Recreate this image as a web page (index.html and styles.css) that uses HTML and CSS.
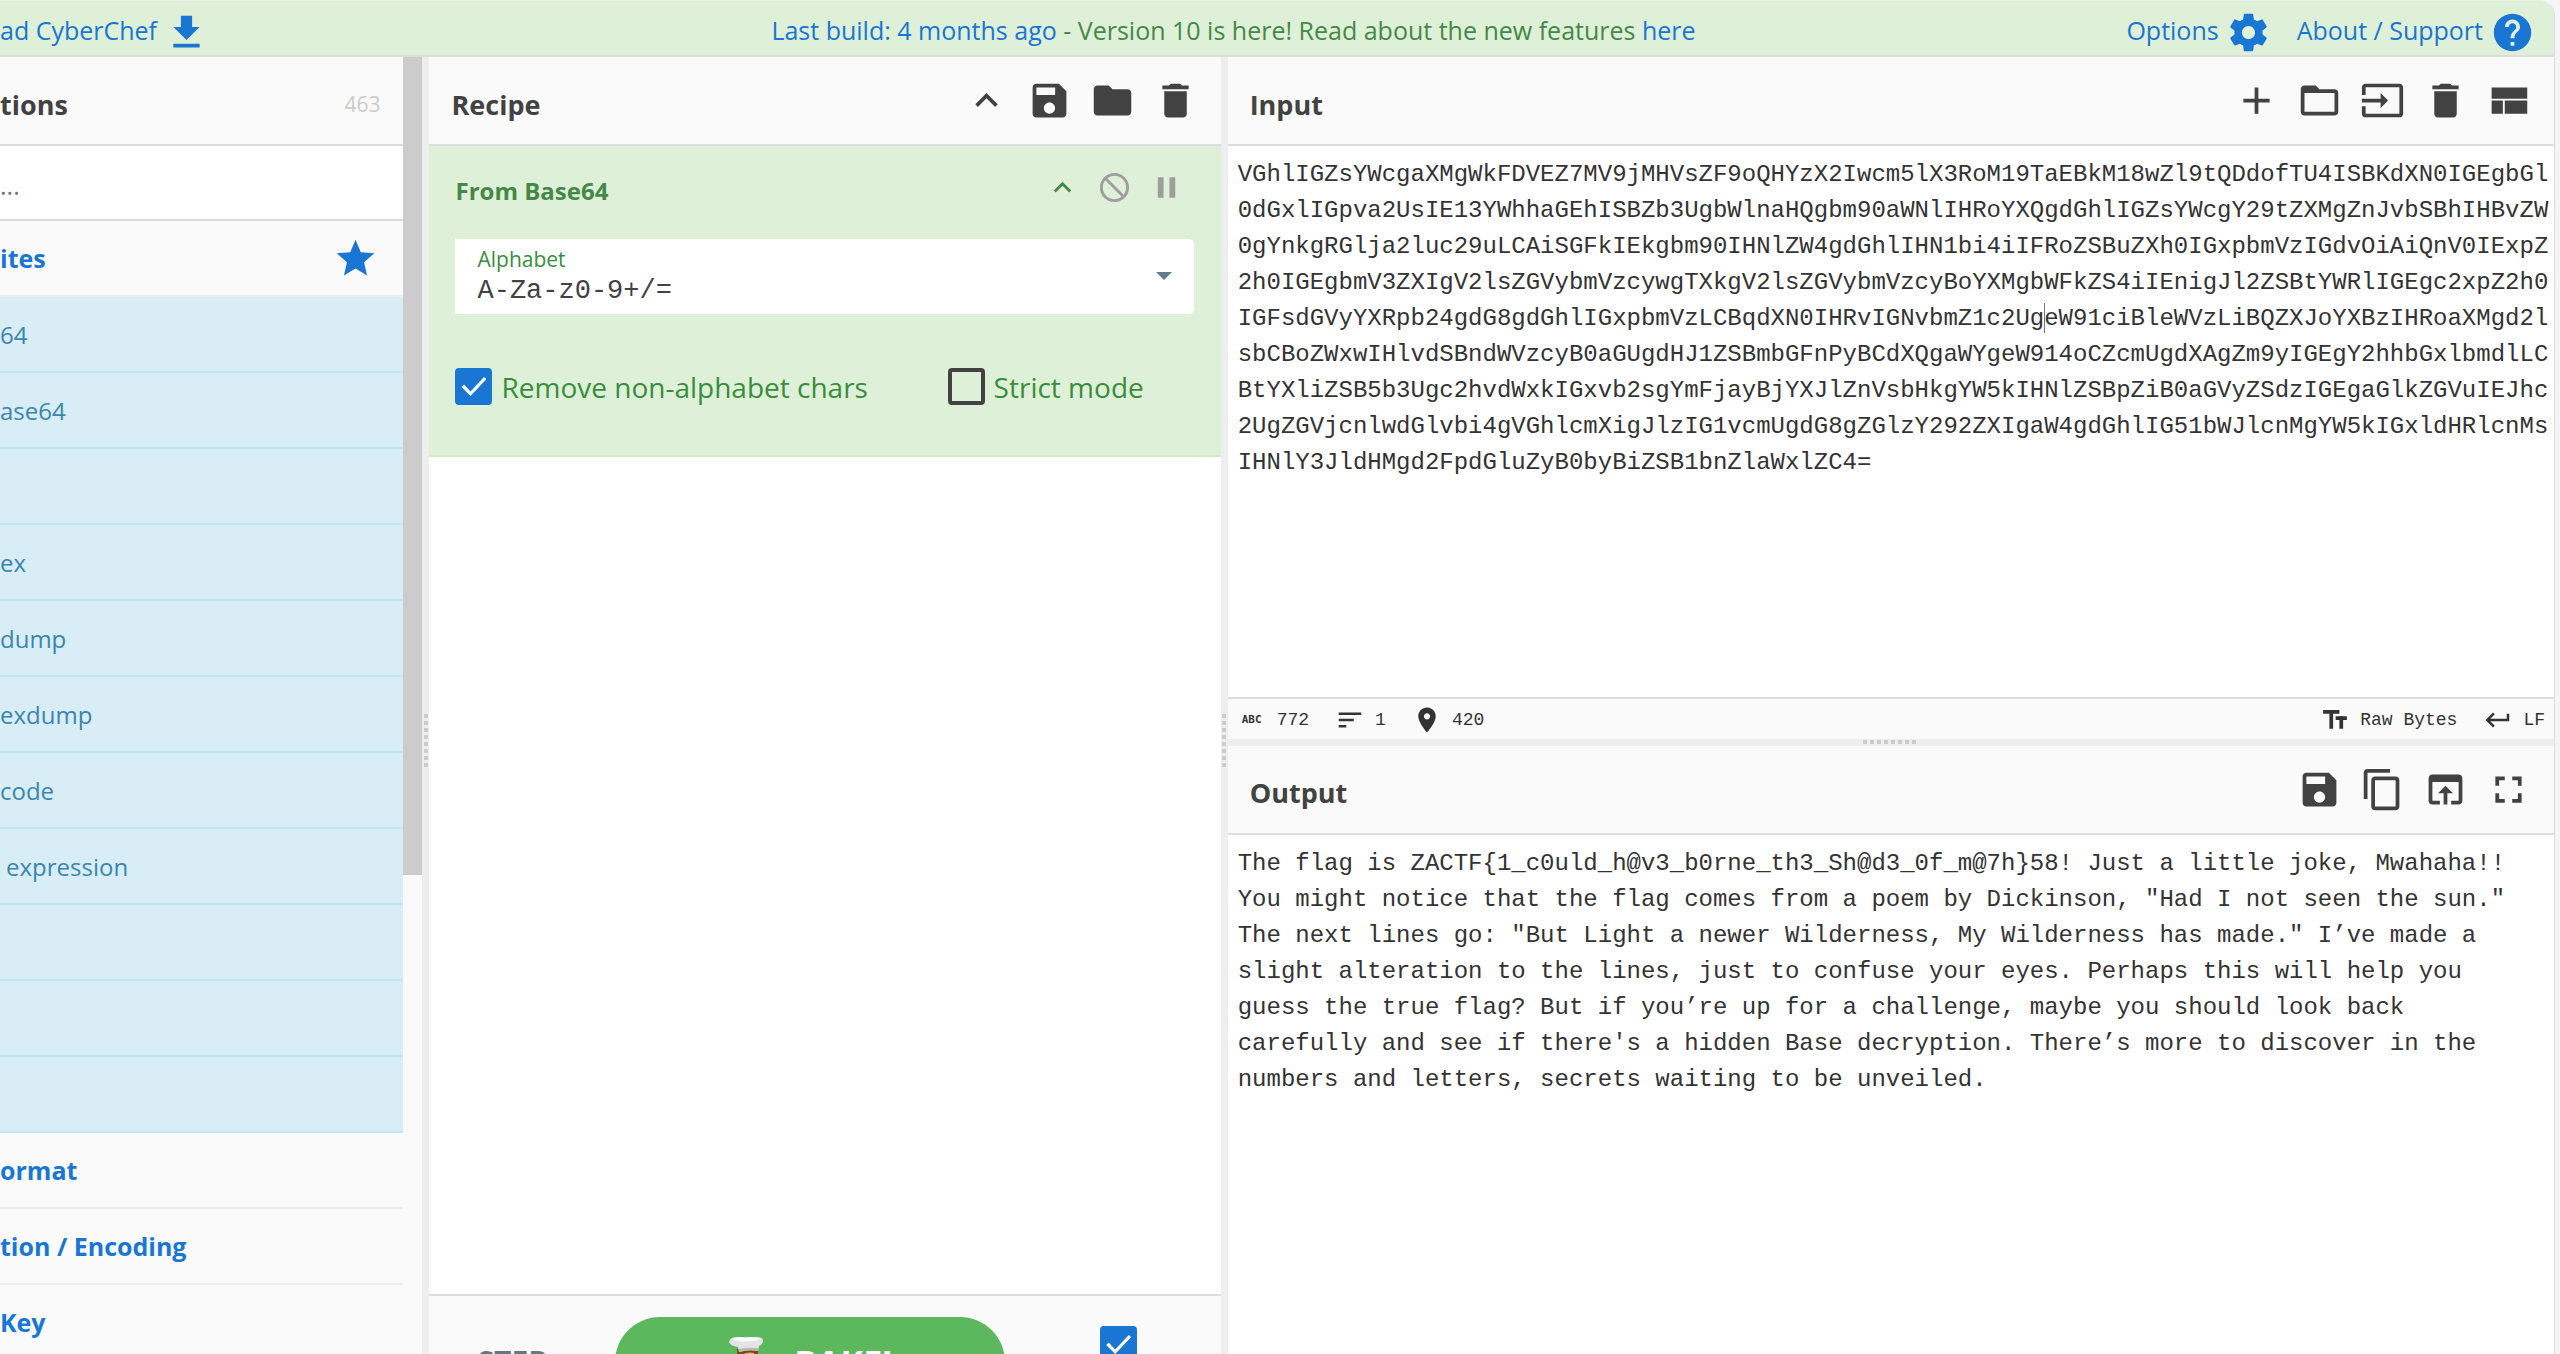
FILE: index.html
```html
<!DOCTYPE html>
<html lang="en">
<head>
<meta charset="utf-8">
<title>CyberChef</title>
<link rel="stylesheet" href="styles.css">
</head>
<body>
<svg class="sprite" aria-hidden="true">
  <symbol id="i-download" viewBox="0 0 24 24"><path d="M19 9h-4V3H9v6H5l7 7 7-7zM5 18v2h14v-2H5z"/></symbol>
  <symbol id="i-gear" viewBox="0 0 24 24"><path d="M19.43 12.98c.04-.32.07-.64.07-.98s-.03-.66-.07-.98l2.11-1.65c.19-.15.24-.42.12-.64l-2-3.46c-.12-.22-.39-.3-.61-.22l-2.49 1c-.52-.4-1.08-.73-1.69-.98l-.38-2.65C14.46 2.18 14.25 2 14 2h-4c-.25 0-.46.18-.49.42l-.38 2.65c-.61.25-1.17.59-1.69.98l-2.49-1c-.23-.09-.49 0-.61.22l-2 3.46c-.13.22-.07.49.12.64l2.11 1.65c-.04.32-.07.65-.07.98s.03.66.07.98l-2.11 1.65c-.19.15-.24.42-.12.64l2 3.46c.12.22.39.3.61.22l2.49-1c.52.4 1.08.73 1.69.98l.38 2.65c.03.24.24.42.49.42h4c.25 0 .46-.18.49-.42l.38-2.65c.61-.25 1.17-.59 1.69-.98l2.49 1c.23.09.49 0 .61-.22l2-3.46c.12-.22.07-.49-.12-.64l-2.11-1.65zM12 15.5c-1.93 0-3.5-1.57-3.5-3.5s1.57-3.5 3.5-3.5 3.5 1.57 3.5 3.5-1.57 3.5-3.5 3.5z"/></symbol>
  <symbol id="i-help" viewBox="0 0 24 24"><path d="M12 2C6.48 2 2 6.48 2 12s4.48 10 10 10 10-4.48 10-10S17.52 2 12 2zm1 17h-2v-2h2v2zm2.07-7.75l-.9.92C13.45 12.9 13 13.5 13 15h-2v-.5c0-1.1.45-2.1 1.17-2.83l1.24-1.26c.37-.36.59-.86.59-1.41 0-1.1-.9-2-2-2s-2 .9-2 2H8c0-2.21 1.79-4 4-4s4 1.79 4 4c0 .88-.36 1.68-.93 2.25z"/></symbol>
  <symbol id="i-star" viewBox="0 0 24 24"><path d="M12 17.27L18.18 21l-1.64-7.03L22 9.24l-7.19-.61L12 2 9.19 8.63 2 9.24l5.46 4.73L5.82 21z"/></symbol>
  <symbol id="i-up" viewBox="0 0 24 24"><path d="M7.41 15.41L12 10.83l4.59 4.58L18 14l-6-6-6 6z"/></symbol>
  <symbol id="i-save" viewBox="0 0 24 24"><path d="M17 3H5c-1.11 0-2 .9-2 2v14c0 1.1.89 2 2 2h14c1.1 0 2-.9 2-2V7l-4-4zm-5 16c-1.66 0-3-1.34-3-3s1.34-3 3-3 3 1.34 3 3-1.34 3-3 3zm3-10H5V5h10v4z"/></symbol>
  <symbol id="i-folder" viewBox="0 0 24 24"><path d="M10 4H4c-1.1 0-1.99.9-1.99 2L2 18c0 1.1.9 2 2 2h16c1.1 0 2-.9 2-2V8c0-1.1-.9-2-2-2h-8l-2-2z"/></symbol>
  <symbol id="i-folder-open" viewBox="0 0 24 24"><path d="M20 6h-8l-2-2H4c-1.1 0-1.99.9-1.99 2L2 18c0 1.1.9 2 2 2h16c1.1 0 2-.9 2-2V8c0-1.1-.9-2-2-2zm0 12H4V8h16v10z"/></symbol>
  <symbol id="i-trash" viewBox="0 0 24 24"><path d="M6 19c0 1.1.9 2 2 2h8c1.1 0 2-.9 2-2V7H6v12zM19 4h-3.5l-1-1h-5l-1 1H5v2h14V4z"/></symbol>
  <symbol id="i-add" viewBox="0 0 24 24"><path d="M19 13h-6v6h-2v-6H5v-2h6V5h2v6h6v2z"/></symbol>
  <symbol id="i-input" viewBox="0 0 24 24"><path d="M21 3.01H3c-1.1 0-2 .9-2 2V9h2V4.99h18v14.03H3V15H1v4.01c0 1.1.9 1.98 2 1.98h18c1.1 0 2-.88 2-1.98v-14c0-1.11-.9-2-2-2zM11 16l4-4-4-4v3H1v2h10v3z"/></symbol>
  <symbol id="i-layout" viewBox="0 0 24 24"><path d="M3 19h6v-7H3v7zm7 0h12v-7H10v7zM3 5v6h19V5H3z"/></symbol>
  <symbol id="i-block" viewBox="0 0 24 24"><path d="M12 2C6.48 2 2 6.48 2 12s4.48 10 10 10 10-4.48 10-10S17.52 2 12 2zm0 18c-4.42 0-8-3.58-8-8 0-1.85.63-3.55 1.69-4.9L16.9 18.31C15.55 19.37 13.85 20 12 20zm6.31-3.1L7.1 5.69C8.45 4.63 10.15 4 12 4c4.42 0 8 3.58 8 8 0 1.85-.63 3.55-1.69 4.9z"/></symbol>
  <symbol id="i-pause" viewBox="0 0 24 24"><path d="M6 19h4V5H6v14zm8-14v14h4V5h-4z"/></symbol>
  <symbol id="i-sort" viewBox="0 0 24 24"><path d="M3 18h6v-2H3v2zM3 6v2h18V6H3zm0 7h12v-2H3v2z"/></symbol>
  <symbol id="i-pin" viewBox="0 0 24 24"><path d="M12 2C8.13 2 5 5.13 5 9c0 5.25 7 13 7 13s7-7.75 7-13c0-3.87-3.13-7-7-7zm0 9.5c-1.38 0-2.5-1.12-2.5-2.5s1.12-2.5 2.5-2.5 2.5 1.12 2.5 2.5-1.12 2.5-2.5 2.5z"/></symbol>
  <symbol id="i-size" viewBox="0 0 24 24"><rect x="2.5" y="4" width="13" height="3"/><rect x="7.5" y="4" width="3" height="15"/><rect x="12.5" y="9" width="9" height="3"/><rect x="15.5" y="9" width="3" height="10"/></symbol>
  <symbol id="i-return" viewBox="0 0 24 24"><path d="M19 7v4H5.83l3.58-3.59L8 6l-6 6 6 6 1.41-1.41L5.83 13H21V7h-2z"/></symbol>
  <symbol id="i-copy" viewBox="0 0 24 24"><path d="M16 1H4c-1.1 0-2 .9-2 2v14h2V3h12V1zm3 4H8c-1.1 0-2 .9-2 2v14c0 1.1.9 2 2 2h11c1.1 0 2-.9 2-2V7c0-1.1-.9-2-2-2zm0 16H8V7h11v14z"/></symbol>
  <symbol id="i-browser" viewBox="0 0 24 24"><path d="M19 4H5c-1.11 0-2 .9-2 2v12c0 1.1.89 2 2 2h4v-2H5V8h14v10h-4v2h4c1.1 0 2-.9 2-2V6c0-1.1-.89-2-2-2zm-7 6l-4 4h3v6h2v-6h3l-4-4z"/></symbol>
  <symbol id="i-full" viewBox="0 0 24 24"><path d="M7 14H5v5h5v-2H7v-3zm-2-4h2V7h3V5H5v5zm12 7h-3v2h5v-5h-2v3zM14 5v2h3v3h2V5h-5z"/></symbol>
</svg>

<div class="app">
  <header class="banner">
    <a class="banner-link download" href="#">ad CyberChef <svg class="icon"><use href="#i-download"/></svg></a>
    <p class="notice"><a href="#">Last build: 4 months ago</a> - Version 10 is here! Read about the new features <a href="#">here</a></p>
    <nav class="banner-nav">
      <a class="banner-link" href="#">Options <svg class="icon"><use href="#i-gear"/></svg></a>
      <a class="banner-link" href="#">About / Support <svg class="icon"><use href="#i-help"/></svg></a>
    </nav>
  </header>

  <main class="workspace">
    <section class="operations">
      <div class="op-list">
        <div class="title title-ops"><h2>tions</h2><span class="count">463</span></div>
        <input class="search" type="search" placeholder="..." aria-label="Search operations">
        <a class="category first" href="#">ites <svg class="icon"><use href="#i-star"/></svg></a>
        <ul class="ops">
          <li>64</li>
          <li>ase64</li>
          <li></li>
          <li>ex</li>
          <li>dump</li>
          <li>exdump</li>
          <li>code</li>
          <li class="spaced">expression</li>
          <li></li>
          <li></li>
          <li></li>
        </ul>
        <a class="category" href="#">ormat</a>
        <a class="category" href="#">tion / Encoding</a>
        <a class="category" href="#">Key</a>
      </div>
      <div class="scroll-track"><div class="scroll-thumb"></div></div>
    </section>

    <div class="gutter gutter-v"></div>

    <section class="recipe">
      <div class="title">
        <h2>Recipe</h2>
        <div class="tools">
          <button type="button" aria-label="Hide arguments"><svg class="icon"><use href="#i-up"/></svg></button>
          <button type="button" aria-label="Save recipe"><svg class="icon"><use href="#i-save"/></svg></button>
          <button type="button" aria-label="Load recipe"><svg class="icon"><use href="#i-folder"/></svg></button>
          <button type="button" aria-label="Clear recipe"><svg class="icon"><use href="#i-trash"/></svg></button>
        </div>
      </div>
      <div class="recipe-body">
        <article class="operation">
          <div class="operation-head">
            <h3>From Base64</h3>
            <div class="operation-tools">
              <button class="green" type="button" aria-label="Collapse"><svg class="icon"><use href="#i-up"/></svg></button>
              <button type="button" aria-label="Disable operation"><svg class="icon"><use href="#i-block"/></svg></button>
              <button type="button" aria-label="Set breakpoint"><svg class="icon"><use href="#i-pause"/></svg></button>
            </div>
          </div>
          <div class="arg">
            <label for="alphabet">Alphabet</label>
            <select id="alphabet"><option>A-Za-z0-9+/=</option></select>
          </div>
          <div class="checks">
            <label class="check"><input type="checkbox" checked>Remove non-alphabet chars</label>
            <label class="check"><input type="checkbox">Strict mode</label>
          </div>
        </article>
      </div>
      <div class="controls">
        <button class="step" type="button">STEP</button>
        <button class="bake" type="button">
          <svg class="chef" viewBox="0 0 36 52" aria-hidden="true">
            <path d="M9 13h21v16H9z" fill="#7a4a1d"/>
            <path d="M13 20q5-5 13-3v22H13z" fill="#e2b06c"/>
            <path d="M2 50q2-14 16-14t16 14z" fill="#fff"/>
            <path d="M1 6q1-5 8-5h20q6 0 6 4 0 3-4 5l-1 5q-9-2-19 1l-1-5q-8-1-9-5z" fill="#e4e4e4"/>
            <path d="M5 3q6-3 12-1 7-2 15 1-6 3-13 2-8 2-14-2z" fill="#fff"/>
            <path d="M11 13q9-2 20-1l-1 3q-9-2-19 1z" fill="#b9b9b9"/>
          </svg>
          <span>BAKE!</span>
        </button>
        <label class="auto"><input type="checkbox" checked><span>Auto Bake</span></label>
      </div>
    </section>

    <div class="gutter gutter-v"></div>

    <div class="io">
      <section class="pane">
        <div class="title title-io">
          <h2>Input</h2>
          <div class="tools">
            <button type="button" aria-label="Add input tab"><svg class="icon"><use href="#i-add"/></svg></button>
            <button type="button" aria-label="Open folder"><svg class="icon"><use href="#i-folder-open"/></svg></button>
            <button type="button" aria-label="Open file"><svg class="icon"><use href="#i-input"/></svg></button>
            <button type="button" aria-label="Clear"><svg class="icon"><use href="#i-trash"/></svg></button>
            <button type="button" aria-label="Reset layout"><svg class="icon"><use href="#i-layout"/></svg></button>
          </div>
        </div>
        <div class="editor">
          <textarea class="code" spellcheck="false" aria-label="Input">VGhlIGZsYWcgaXMgWkFDVEZ7MV9jMHVsZF9oQHYzX2Iwcm5lX3RoM19TaEBkM18wZl9tQDdofTU4ISBKdXN0IGEgbGl0dGxlIGpva2UsIE13YWhhaGEhISBZb3UgbWlnaHQgbm90aWNlIHRoYXQgdGhlIGZsYWcgY29tZXMgZnJvbSBhIHBvZW0gYnkgRGlja2luc29uLCAiSGFkIEkgbm90IHNlZW4gdGhlIHN1bi4iIFRoZSBuZXh0IGxpbmVzIGdvOiAiQnV0IExpZ2h0IGEgbmV3ZXIgV2lsZGVybmVzcywgTXkgV2lsZGVybmVzcyBoYXMgbWFkZS4iIEnigJl2ZSBtYWRlIGEgc2xpZ2h0IGFsdGVyYXRpb24gdG8gdGhlIGxpbmVzLCBqdXN0IHRvIGNvbmZ1c2UgeW91ciBleWVzLiBQZXJoYXBzIHRoaXMgd2lsbCBoZWxwIHlvdSBndWVzcyB0aGUgdHJ1ZSBmbGFnPyBCdXQgaWYgeW914oCZcmUgdXAgZm9yIGEgY2hhbGxlbmdlLCBtYXliZSB5b3Ugc2hvdWxkIGxvb2sgYmFjayBjYXJlZnVsbHkgYW5kIHNlZSBpZiB0aGVyZSdzIGEgaGlkZGVuIEJhc2UgZGVjcnlwdGlvbi4gVGhlcmXigJlzIG1vcmUgdG8gZGlzY292ZXIgaW4gdGhlIG51bWJlcnMgYW5kIGxldHRlcnMsIHNlY3JldHMgd2FpdGluZyB0byBiZSB1bnZlaWxlZC4=</textarea>
          <i class="caret"></i>
        </div>
        <footer class="status">
          <span class="stat"><b class="abc">ABC</b>772</span>
          <span class="stat"><svg class="icon"><use href="#i-sort"/></svg>1</span>
          <span class="stat"><svg class="icon"><use href="#i-pin"/></svg>420</span>
          <button class="stat push" type="button"><svg class="icon"><use href="#i-size"/></svg>Raw Bytes</button>
          <button class="stat" type="button"><svg class="icon"><use href="#i-return"/></svg>LF</button>
        </footer>
      </section>

      <div class="gutter gutter-h"></div>

      <section class="pane">
        <div class="title title-io">
          <h2>Output</h2>
          <div class="tools">
            <button type="button" aria-label="Save output"><svg class="icon"><use href="#i-save"/></svg></button>
            <button type="button" aria-label="Copy output"><svg class="icon"><use href="#i-copy"/></svg></button>
            <button type="button" aria-label="Replace input with output"><svg class="icon"><use href="#i-browser"/></svg></button>
            <button type="button" aria-label="Maximise"><svg class="icon"><use href="#i-full"/></svg></button>
          </div>
        </div>
        <output class="code result">The flag is ZACTF{1_c0uld_h@v3_b0rne_th3_Sh@d3_0f_m@7h}58! Just a little joke, Mwahaha!! You might notice that the flag comes from a poem by Dickinson, "Had I not seen the sun." The next lines go: "But Light a newer Wilderness, My Wilderness has made." I’ve made a slight alteration to the lines, just to confuse your eyes. Perhaps this will help you guess the true flag? But if you’re up for a challenge, maybe you should look back carefully and see if there's a hidden Base decryption. There’s more to discover in the numbers and letters, secrets waiting to be unveiled.</output>
      </section>
    </div>
  </main>
</div>
</body>
</html>
```
FILE: styles.css
```css
:root {
  --ui: "Open Sans", "Noto Sans", sans-serif;
  --mono: "Liberation Mono", monospace;
  --blue: #1976d2;
  --dark: #424242;
  --line: #ddd;
  --panel: #fafafa;
  --green-bg: #dff0d8;
}

* { box-sizing: border-box; }

body {
  margin: 0;
  height: 100vh;
  overflow: hidden;
  background: #f5f5f5;
  font: 25px/36px var(--ui);
  color: var(--dark);
}

h2, h3, p, ul { margin: 0; padding: 0; }
a { color: var(--blue); text-decoration: none; }
button { padding: 0; border: 0; background: none; color: inherit; font: inherit; }
.sprite { display: none; }
.icon { display: block; flex: none; width: 45px; height: 45px; fill: currentColor; }

/* The workspace runs past the fold, so the bake controls are cut off. */
.app {
  display: flex;
  flex-direction: column;
  height: calc(100vh + 73px);
  margin-right: 5px;
  border-top: 1px solid #eee;
  border-right: 1px solid var(--line);
  border-radius: 0 16px 0 0;
  overflow: hidden;
}

/* Banner */
.banner {
  display: grid;
  grid-template-columns: 1fr auto 1fr;
  align-items: center;
  flex: none;
  height: 56px;
  margin-left: -68px;
  padding: 4px 19px 0 0;
  border-bottom: 2px solid var(--line);
  background: var(--green-bg);
  color: #468847;
}
.banner-link { display: flex; align-items: center; gap: 7px; }
.banner-link .icon { position: relative; top: 2px; }
.download { padding-left: 68px; }
.banner-nav { display: flex; justify-content: flex-end; gap: 26px; }

/* Columns */
.workspace { display: flex; flex: 1; min-height: 0; }
.operations { display: flex; flex: 165 1 0; min-width: 0; }
.recipe { display: flex; flex-direction: column; flex: 309 1 0; min-width: 0; background: #fff; }
.io { display: flex; flex-direction: column; flex: 518 1 0; min-width: 0; }

.gutter { flex: none; display: flex; align-items: center; justify-content: center; background: #eee; }
.gutter::before { content: ""; }
.gutter-v { width: 7px; }
.gutter-v::before { width: 4px; height: 56px; background: repeating-linear-gradient(#ccc 0 4px, transparent 4px 7px); }
.gutter-h { height: 7px; }
.gutter-h::before { width: 56px; height: 4px; background: repeating-linear-gradient(90deg, #ccc 0 4px, transparent 4px 7px); }

.title {
  display: flex;
  align-items: center;
  justify-content: space-between;
  flex: none;
  height: 89px;
  padding: 0 23px 0 22px;
  border-bottom: 2px solid var(--line);
  background: var(--panel);
}
.title h2 { padding-top: 8px; font-size: 27px; font-weight: 700; }
.title-ops { padding-left: 0; }
.tools { display: flex; gap: 18px; }
.count { padding-top: 6px; color: #ccc; font-size: 21px; }

/* Operations */
.op-list { flex: 1; min-width: 0; background: var(--panel); }
.search {
  display: block;
  width: 100%;
  height: 75px;
  padding: 4px 0 0;
  border: 0;
  border-bottom: 2px solid var(--line);
  border-radius: 0;
  background: #fff;
  font: inherit;
}
.search::placeholder { color: #6c757d; }
.category {
  display: flex;
  align-items: center;
  justify-content: space-between;
  height: 76px;
  padding-right: 25px;
  border-bottom: 2px solid #eee;
  font-weight: 700;
}
.ops { list-style: none; background: #d9edf7; color: #3a87ad; font-size: 24px; }
.ops li { height: 76px; border-bottom: 2px solid #bce8f1; line-height: 76px; }
.ops .spaced { padding-left: 6px; }
.scroll-track { flex: none; width: 19px; background: var(--panel); }
.scroll-thumb { height: 60%; max-height: 818px; background: #ccc; }

/* Recipe */
.recipe-body { flex: 1; min-height: 0; }
.operation { padding: 18px 27px 50px 26px; border-bottom: 2px solid #d6e9c6; background: var(--green-bg); color: #468847; }
.operation-head { display: flex; align-items: center; justify-content: space-between; height: 46px; padding-right: 10px; }
.operation-head h3 { padding-top: 8px; font-size: 24px; font-weight: 700; }
.operation-tools { display: flex; gap: 17px; color: #9e9e9e; }
.operation-tools .icon { width: 35px; height: 35px; }
.operation-tools .green { color: #468847; }
.arg {
  position: relative;
  display: flex;
  flex-direction: column;
  margin-top: 29px;
  padding: 5px 0;
  border-radius: 0 5px 5px 0;
  background: #fff;
}
.arg label { height: 29px; padding-left: 22px; color: #388e3c; font-size: 21px; line-height: 30px; }
.arg select {
  height: 36px;
  padding: 0 22px;
  border: 0;
  background: none;
  appearance: none;
  color: var(--dark);
  font: 27px/36px var(--mono);
}
.arg::after {
  content: "";
  position: absolute;
  right: 22px;
  top: 33px;
  border: 8px solid transparent;
  border-top-color: #607d8b;
  border-bottom: 0;
}
.checks { display: grid; grid-template-columns: 2fr 1fr; margin-top: 54px; }
.check { display: flex; align-items: center; gap: 9px; color: #388e3c; font-size: 28px; }
input[type="checkbox"] {
  flex: none;
  width: 37px;
  height: 37px;
  margin: 0;
  border: 4px solid var(--dark);
  border-radius: 4px;
  appearance: none;
}
input[type="checkbox"]:checked { display: grid; place-items: center; border-color: var(--blue); background: var(--blue); }
input[type="checkbox"]:checked::before {
  content: "";
  width: 25px;
  height: 19px;
  background: #fff;
  clip-path: polygon(0 52%, 10% 40%, 36% 76%, 90% 0, 100% 10%, 36% 100%);
}

.controls {
  display: grid;
  grid-template-columns: 186px 1fr 216px;
  align-items: center;
  flex: none;
  height: 133px;
  border-top: 2px solid var(--line);
  background: var(--panel);
}
.step { padding-left: 48px; color: #6c757d; font-size: 30px; font-weight: 700; text-align: left; }
.bake {
  display: flex;
  align-items: center;
  justify-content: center;
  gap: 30px;
  height: 90px;
  border-radius: 45px;
  background: #5cb85c;
  color: #fff;
  font-size: 34px;
  font-weight: 700;
}
.chef { width: 36px; height: 52px; }
.auto { display: flex; flex-direction: column; align-items: center; padding-left: 12px; font-size: 24px; line-height: 34px; }

/* Input and output */
.pane { display: flex; flex-direction: column; flex: 1 1 0; min-height: 0; background: #fff; }
.editor { position: relative; display: flex; flex: 1; min-height: 0; font: 24px/36px var(--mono); }
.code {
  width: 100%;
  padding: 11px 0 0 10px;
  border: 0;
  outline: 0;
  resize: none;
  overflow: hidden;
  background: none;
  color: #333;
  font: 24px/36px var(--mono);
}
textarea.code { word-break: break-all; }
.result { display: block; padding-right: 30px; }
.caret { position: absolute; left: calc(10px + 56ch); top: 157px; width: 1px; height: 30px; background: #777; }
.status {
  display: flex;
  align-items: center;
  flex: none;
  gap: 26px;
  height: 42px;
  padding: 2px 9px 0;
  border-top: 2px solid var(--line);
  background: var(--panel);
  color: #333;
  font: 18px/24px var(--mono);
}
.stat { display: flex; align-items: center; gap: 10px; }
.stat .icon { width: 30px; height: 30px; }
.abc { width: 30px; text-align: center; font: 700 11px/14px "DejaVu Sans Mono", monospace; }
.push { margin-left: auto; }
```
